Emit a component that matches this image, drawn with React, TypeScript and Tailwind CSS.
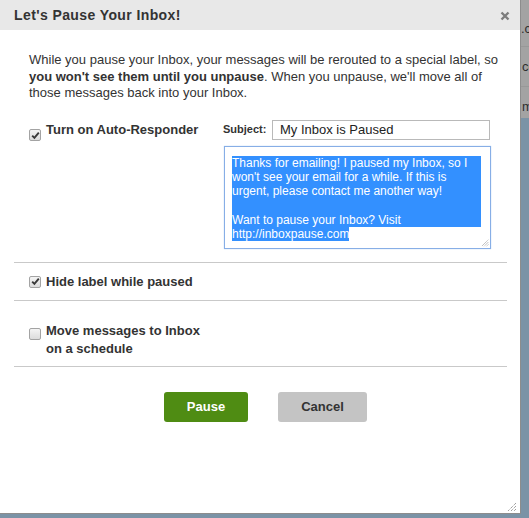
import React from 'react';

const FONT = { fontFamily: '"Liberation Sans", Arial, sans-serif' };

function Check({ checked }: { checked: boolean }) {
  return (
    <span className="inline-flex w-[12px] h-[12px] shrink-0 items-center justify-center rounded-[2px] border border-[#a3a3a3] bg-gradient-to-b from-[#f4f4f4] to-[#dcdcdc]">
      {checked && (
        <svg width="9" height="9" viewBox="0 0 9 9">
          <path d="M1.2 4.6 L3.4 6.9 L7.8 1.6" fill="none" stroke="#3a3a3a" strokeWidth="1.9" />
        </svg>
      )}
    </span>
  );
}

function Grip({ size = 10 }: { size?: number }) {
  return (
    <svg width={size} height={size} viewBox="0 0 10 10">
      <path d="M9 1 L1 9 M9 4 L4 9 M9 7 L7 9" stroke="#777" strokeWidth="1" strokeDasharray="1 1" />
    </svg>
  );
}

function Divider() {
  return <div className="mx-[14px] w-[493px] h-px bg-[#c9c9c9]" />;
}

export default function App() {
  const hl = 'bg-[#3390ff] text-white';
  return (
    <div className="w-[529px] h-[518px] bg-[#7b93a6] overflow-hidden flex flex-col" style={FONT}>
      <div className="flex h-[514px] shrink-0">
        {/* Dialog */}
        <div className="relative w-[521px] h-[514px] shrink-0 bg-white border-r border-b border-[#8d8d8d] flex flex-col text-[#333]">
          <div className="h-[30px] bg-[#e8e8e8] flex items-center justify-between pl-[14px] pr-[10px]">
            <h1 className="text-[14px] font-bold tracking-[0.4px] text-[#333]">Let's Pause Your Inbox!</h1>
            <svg width="10" height="10" viewBox="0 0 10 10" className="mt-[1px]">
              <path d="M1.5 1.5 L8.5 8.5 M8.5 1.5 L1.5 8.5" stroke="#7d7d7d" strokeWidth="2.4" />
            </svg>
          </div>

          <p className="mt-[22px] pl-[29px] text-[13px] leading-[16.5px] text-[#333]">
            While you pause your Inbox, your messages will be rerouted to a special label, so
            <br />
            <b>you won't see them until you unpause</b>. When you unpause, we'll move all of
            <br />
            those messages back into your Inbox.
          </p>

          {/* Auto responder */}
          <div className="mt-[18px] flex">
            <label className="w-[223px] pl-[29px] flex items-start gap-[5px] pt-[2px]">
              <span className="mt-[1px]"><Check checked /></span>
              <span className="text-[13px] font-bold leading-[16px]">Turn on Auto-Responder</span>
            </label>
            <div className="flex flex-col">
              <div className="flex items-center h-[20px]">
                <span className="w-[49px] text-[11px] font-bold text-[#333]">Subject:</span>
                <div className="w-[218px] h-[20px] border border-[#b9b9b9] flex items-center pl-[7px] text-[13px] text-[#222]">
                  My Inbox is Paused
                </div>
              </div>
              <div className="relative mt-[6px] ml-[1px] w-[267px] h-[103px] border border-[#87aee6] shadow-[0_0_1px_#a8c6f0] pl-[7px] pt-[9px] text-[12px] leading-[14.3px]">
                <div className={`w-[249px] ${hl}`}>Thanks for emailing! I paused my Inbox, so I</div>
                <div className={`w-[249px] ${hl}`}>won't see your email for a while. If this is</div>
                <div className={`w-[249px] ${hl}`}>urgent, please contact me another way!</div>
                <div className={`w-[249px] h-[14.3px] ${hl}`}></div>
                <div className={`w-[249px] ${hl}`}>Want to pause your Inbox? Visit</div>
                <div><span className={hl}>http://inboxpause.com</span></div>
                <span className="absolute right-[1px] bottom-[1px] leading-none"><Grip size={8} /></span>
              </div>
            </div>
          </div>

          <div className="mt-[13px]"><Divider /></div>

          <label className="pl-[29px] pt-[11px] pb-[10px] flex items-center gap-[5px]">
            <Check checked />
            <span className="text-[13px] font-bold leading-[16px]">Hide label while paused</span>
          </label>

          <Divider />

          <label className="pl-[29px] pt-[21px] pb-[8px] flex items-start gap-[5px]">
            <span className="mt-[1px]"><Check checked={false} /></span>
            <span className="text-[13px] font-bold leading-[18px]">
              Move messages to Inbox
              <br />
              on a schedule
            </span>
          </label>

          <Divider />

          <div className="mt-[25px] pl-[164px] flex gap-[30px]">
            <button className="w-[84px] h-[30px] rounded-[3px] bg-[#4f8c13] text-white text-[13px] font-bold">
              Pause
            </button>
            <button className="w-[89px] h-[30px] rounded-[3px] bg-[#c4c4c4] text-[#333] text-[13px] font-bold">
              Cancel
            </button>
          </div>

          <span className="absolute right-[3px] bottom-[1px] leading-none"><Grip /></span>
        </div>

        {/* Page behind */}
        <div className="flex-1 flex flex-col overflow-hidden">
          <div className="h-[47px] bg-[#a3a3a3] border-b border-[#989898] pt-[21px] text-[13px] text-[#2e2e2e] leading-[16px] whitespace-nowrap">.com</div>
          <div className="h-[40px] bg-[#a3a3a3] border-b border-[#989898] pt-[12px] pl-[1px] text-[13px] text-[#2e2e2e] leading-[16px] whitespace-nowrap">co</div>
          <div className="h-[31px] bg-[#a3a3a3] pt-[12px] pl-[1px] text-[13px] text-[#2e2e2e] leading-[16px] whitespace-nowrap">m</div>
        </div>
      </div>
    </div>
  );
}
